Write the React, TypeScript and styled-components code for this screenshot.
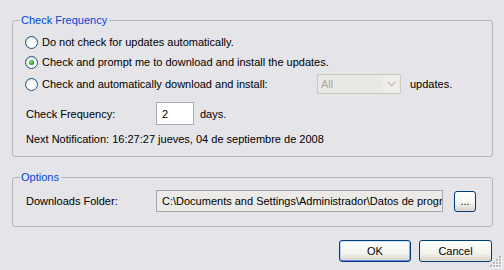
import React from 'react';
import styled, { createGlobalStyle } from 'styled-components';

const GlobalStyle = createGlobalStyle`
  html, body {
    margin: 0;
    padding: 0;
    background: #e5e4e9;
  }
  body {
    font-family: 'Liberation Sans', Arial, sans-serif;
    font-size: 11px;
    color: #000;
  }
`;

const Dialog = styled.div`
  position: relative;
  width: 504px;
  height: 270px;
  box-sizing: border-box;
  padding: 13px 11px 0 12px;
  display: flex;
  flex-direction: column;
  background: #e5e4e9;
`;

const Group = styled.fieldset<{ $top?: number; $pad: string }>`
  margin: ${(p) => p.$top ?? 0}px 0 0 0;
  padding: ${(p) => p.$pad};
  border: 1px solid #b5b4bb;
  border-radius: 3px;
  display: flex;
  flex-direction: column;
  min-width: 0;
`;

const Legend = styled.legend`
  color: #0046d5;
  line-height: 14px;
  padding: 0 2px 0 1px;
  margin-left: -5px;
`;

const Row = styled.div<{ $h: number; $top?: number; $indent?: number }>`
  display: flex;
  align-items: center;
  height: ${(p) => p.$h}px;
  margin-top: ${(p) => p.$top ?? 0}px;
  margin-left: ${(p) => p.$indent ?? 0}px;
  white-space: nowrap;
`;

const Radio = styled.span<{ $checked?: boolean }>`
  position: relative;
  flex: none;
  width: 11px;
  height: 11px;
  border: 1px solid #1c5180;
  border-radius: 50%;
  background: radial-gradient(circle at 65% 65%, #ffffff 30%, #dcdcd4 100%);
  margin-right: 4px;

  &::after {
    content: '';
    display: ${(p) => (p.$checked ? 'block' : 'none')};
    position: absolute;
    left: 3px;
    top: 3px;
    width: 5px;
    height: 5px;
    border-radius: 50%;
    background: radial-gradient(circle at 40% 40%, #8ee08e 0%, #21a121 60%, #1a7a1a 100%);
  }
`;

const Label = styled.span<{ $w?: number }>`
  flex: none;
  width: ${(p) => (p.$w ? `${p.$w}px` : 'auto')};
`;

const Combo = styled.div`
  flex: none;
  display: flex;
  width: 84px;
  height: 20px;
  box-sizing: border-box;
  border: 1px solid #cbcabf;
  background: #e9e8e4;
  color: #aca899;
`;

const ComboText = styled.span`
  flex: 1;
  padding: 3px 0 0 3px;
`;

const ComboButton = styled.span`
  flex: none;
  width: 16px;
  margin: 1px;
  background: #eeede9;
  display: flex;
  align-items: center;
  justify-content: center;
`;

const Suffix = styled.span<{ $gap: number }>`
  margin-left: ${(p) => p.$gap}px;
`;

const TextBox = styled.div<{ $w: number; $h: number; $bg: string; $border: string }>`
  flex: none;
  width: ${(p) => p.$w}px;
  height: ${(p) => p.$h}px;
  box-sizing: border-box;
  border: 1px solid ${(p) => p.$border};
  background: ${(p) => p.$bg};
  padding: 0 0 0 5px;
  display: flex;
  align-items: center;
  overflow: hidden;
  white-space: nowrap;
`;

const XpButton = styled.button<{ $w: number; $h: number; $left?: number; $default?: boolean }>`
  flex: none;
  width: ${(p) => p.$w}px;
  height: ${(p) => p.$h}px;
  margin: 0 0 0 ${(p) => p.$left ?? 0}px;
  padding: 0;
  font-family: inherit;
  font-size: 11px;
  line-height: 1;
  color: #000;
  border: 1px solid #003c74;
  border-radius: 3px;
  background: linear-gradient(#ffffff 0%, #f4f4f0 60%, #d6d0c5 100%);
  box-shadow: ${(p) =>
    p.$default
      ? 'inset 0 1px 0 #cee7ff, inset 0 -1px 0 #6982ee, inset 1px 0 0 #bcd4f6, inset -1px 0 0 #89ade4'
      : 'inset 0 -1px 0 #e3e0d2'};
`;

const Footer = styled.div`
  display: flex;
  justify-content: flex-end;
  gap: 8px;
  margin-top: 13px;
  padding-right: 1px;
`;

const Grip = styled.svg`
  position: absolute;
  right: 2px;
  bottom: 2px;
`;

const Chevron = () => (
  <svg width="9" height="6" viewBox="0 0 9 6">
    <path d="M1 1 L4.5 4.5 L8 1" stroke="#c8c6bc" strokeWidth="1.6" fill="none" />
  </svg>
);

const App: React.FC = () => {
  const dots = [
    [9, 0], [6, 3], [9, 3], [3, 6], [6, 6], [9, 6], [0, 9], [3, 9], [6, 9], [9, 9],
  ];
  return (
    <>
      <GlobalStyle />
      <Dialog>
        <Group $pad="5px 12px 8px 12px">
          <Legend>Check Frequency</Legend>
          <Row $h={20}>
            <Radio />
            <Label>Do not check for updates automatically.</Label>
          </Row>
          <Row $h={20}>
            <Radio $checked />
            <Label>Check and prompt me to download and install the updates.</Label>
          </Row>
          <Row $h={22} $top={1}>
            <Radio />
            <Label $w={275}>Check and automatically download and install:</Label>
            <Combo>
              <ComboText>All</ComboText>
              <ComboButton>
                <Chevron />
              </ComboButton>
            </Combo>
            <Suffix $gap={9}>updates.</Suffix>
          </Row>
          <Row $h={27} $top={5} $indent={1}>
            <Label $w={130}>Check Frequency:</Label>
            <TextBox $w={38} $h={23} $bg="#ffffff" $border="#a5acb5">2</TextBox>
            <Suffix $gap={6}>days.</Suffix>
          </Row>
          <Row $h={18} $top={3} $indent={1}>
            <Label>Next Notification: 16:27:27 jueves, 04 de septiembre de 2008</Label>
          </Row>
        </Group>

        <Group $top={13} $pad="6px 12px 14px 12px">
          <Legend>Options</Legend>
          <Row $h={22} $indent={1}>
            <Label $w={130}>Downloads Folder:</Label>
            <TextBox $w={287} $h={22} $bg="#ebeae7" $border="#a3a7ad">
              C:\Documents and Settings\Administrador\Datos de programa
            </TextBox>
            <XpButton $w={22} $h={21} $left={11}>...</XpButton>
          </Row>
        </Group>

        <Footer>
          <XpButton $w={72} $h={22} $default>OK</XpButton>
          <XpButton $w={73} $h={22}>Cancel</XpButton>
        </Footer>

        <Grip width="12" height="12" viewBox="0 0 12 12">
          {dots.map(([x, y]) => (
            <g key={`${x}-${y}`}>
              <rect x={x + 1} y={y + 1} width="2" height="2" fill="#ffffff" />
              <rect x={x} y={y} width="2" height="2" fill="#b8b6ae" />
            </g>
          ))}
        </Grip>
      </Dialog>
    </>
  );
};

export default App;
